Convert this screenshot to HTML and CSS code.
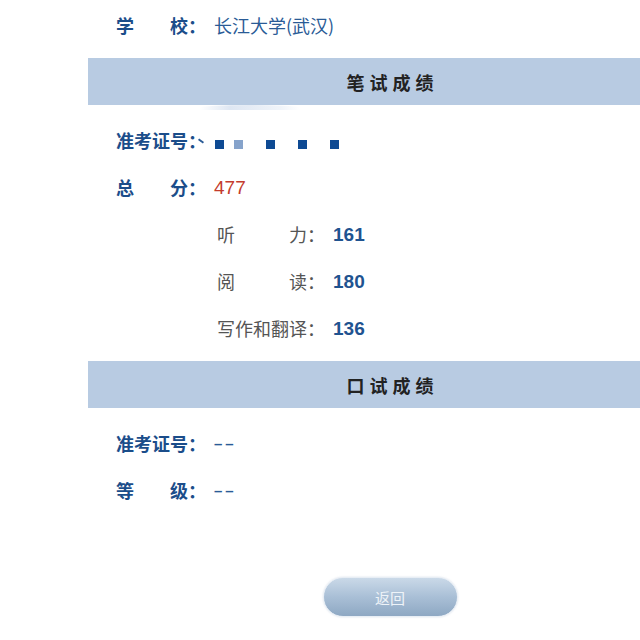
FILE: index.html
```html
<!DOCTYPE html>
<html lang="zh-CN">
<head>
<meta charset="utf-8">
<link rel="stylesheet" href="styles.css">
</head>
<body>
<div class="page">
  <div class="row">
    <span class="label"><span class="just">学校</span>：</span>
    <span class="value">长江大学(武汉)</span>
  </div>

  <div class="bar"><span class="bar-title">笔试成绩</span></div>

  <div class="row">
    <span class="label"><span class="just">准考证号</span>：</span>
    <span class="mask">
      <span class="tick"></span>
      <span class="sq"></span><span class="sq light"></span><span class="sq gap"></span><span class="sq gap"></span><span class="sq gap"></span>
    </span>
  </div>
  <div class="row">
    <span class="label"><span class="just">总分</span>：</span>
    <span class="value num red">477</span>
  </div>
  <div class="row sub">
    <span class="sublabel"><span class="just5">听力</span>：</span>
    <span class="value num bold">161</span>
  </div>
  <div class="row sub">
    <span class="sublabel"><span class="just5">阅读</span>：</span>
    <span class="value num bold">180</span>
  </div>
  <div class="row sub">
    <span class="sublabel"><span class="just5">写作和翻译</span>：</span>
    <span class="value num bold">136</span>
  </div>

  <div class="bar bar2"><span class="bar-title">口试成绩</span></div>

  <div class="row">
    <span class="label"><span class="just">准考证号</span>：</span>
    <span class="value dash">––</span>
  </div>
  <div class="row">
    <span class="label"><span class="just">等级</span>：</span>
    <span class="value dash">––</span>
  </div>

  <div class="actions">
    <button class="back">返回</button>
  </div>
</div>
</body>
</html>
```

FILE: styles.css
```css
html, body {
  margin: 0;
  padding: 0;
  background: #ffffff;
  overflow: hidden;
}
body {
  width: 640px;
  height: 640px;
  font-family: "Noto Sans CJK SC", "Noto Sans", sans-serif;
}
.page {
  margin-left: 88px;
  width: 552px;
  padding-top: 1px;
}
.row {
  height: 47px;
  display: flex;
  align-items: center;
  padding-left: 28px;
  font-size: 18px;
}
.label {
  display: flex;
  color: #1b4d8a;
  font-weight: bold;
  width: 98px;
  flex: none;
}
.just {
  display: inline-block;
  width: 72px;
  text-align: justify;
  text-align-last: justify;
}
.value {
  color: #2a5b96;
}
.value.num {
  font-family: "Liberation Sans", Arial, sans-serif;
  font-size: 19px;
  padding-top: 3px;
}
.value.red {
  color: #c43b2c;
}
.value.bold {
  color: #1f5390;
  font-weight: bold;
}
.value.dash {
  font-family: "Liberation Sans", Arial, sans-serif;
  font-size: 15px;
  font-weight: bold;
  letter-spacing: 3px;
  padding-top: 2px;
}
.row.sub {
  padding-left: 129px;
}
.sublabel {
  display: flex;
  color: #555555;
  width: 116px;
  flex: none;
}
.just5 {
  display: inline-block;
  width: 90px;
  text-align: justify;
  text-align-last: justify;
}
.bar {
  height: 47px;
  background: #b8cbe2;
  display: flex;
  align-items: center;
  justify-content: center;
  padding-left: 52px;
  margin: 10px 0 11px;
  position: relative;
}
.bar::after {
  content: "";
  position: absolute;
  left: 112px;
  top: 47px;
  width: 100px;
  height: 5px;
  border-radius: 50% 50% 0 0;
  background: linear-gradient(90deg, rgba(200,214,234,0) 0%, rgba(200,214,234,0.6) 30%, rgba(220,230,242,0.45) 80%, rgba(220,230,242,0) 100%);
}
.bar2 {
  margin: 10px 0 11px;
}
.bar2::after {
  display: none;
}
.bar-title {
  font-size: 18px;
  font-weight: bold;
  color: #222222;
  letter-spacing: 5px;
  margin-right: -5px;
}
.mask {
  display: flex;
  align-items: center;
  height: 47px;
  padding-top: 9px;
  box-sizing: border-box;
}
.tick {
  width: 6px;
  height: 2px;
  background: #2a5b96;
  transform: rotate(35deg);
  margin: 0 0 6px -16px;
}
.sq {
  width: 9px;
  height: 9px;
  background: #0e4a93;
  margin-left: 11px;
}
.sq.light {
  background: #86a3cb;
  margin-left: 10px;
}
.sq.gap {
  margin-left: 23px;
}
.actions {
  display: flex;
  justify-content: center;
  padding-left: 52px;
  margin-top: 64px;
}
.back {
  width: 135px;
  height: 40px;
  border-radius: 20px;
  border: 1px solid #e8eef5;
  background: linear-gradient(180deg, #cad9e8 0%, #a9bfd6 50%, #8ea8c3 100%);
  color: #eef3f8;
  font-family: "Noto Sans CJK SC", sans-serif;
  font-size: 15px;
  box-shadow: 0 0 2px rgba(150,170,200,0.4);
}
```
